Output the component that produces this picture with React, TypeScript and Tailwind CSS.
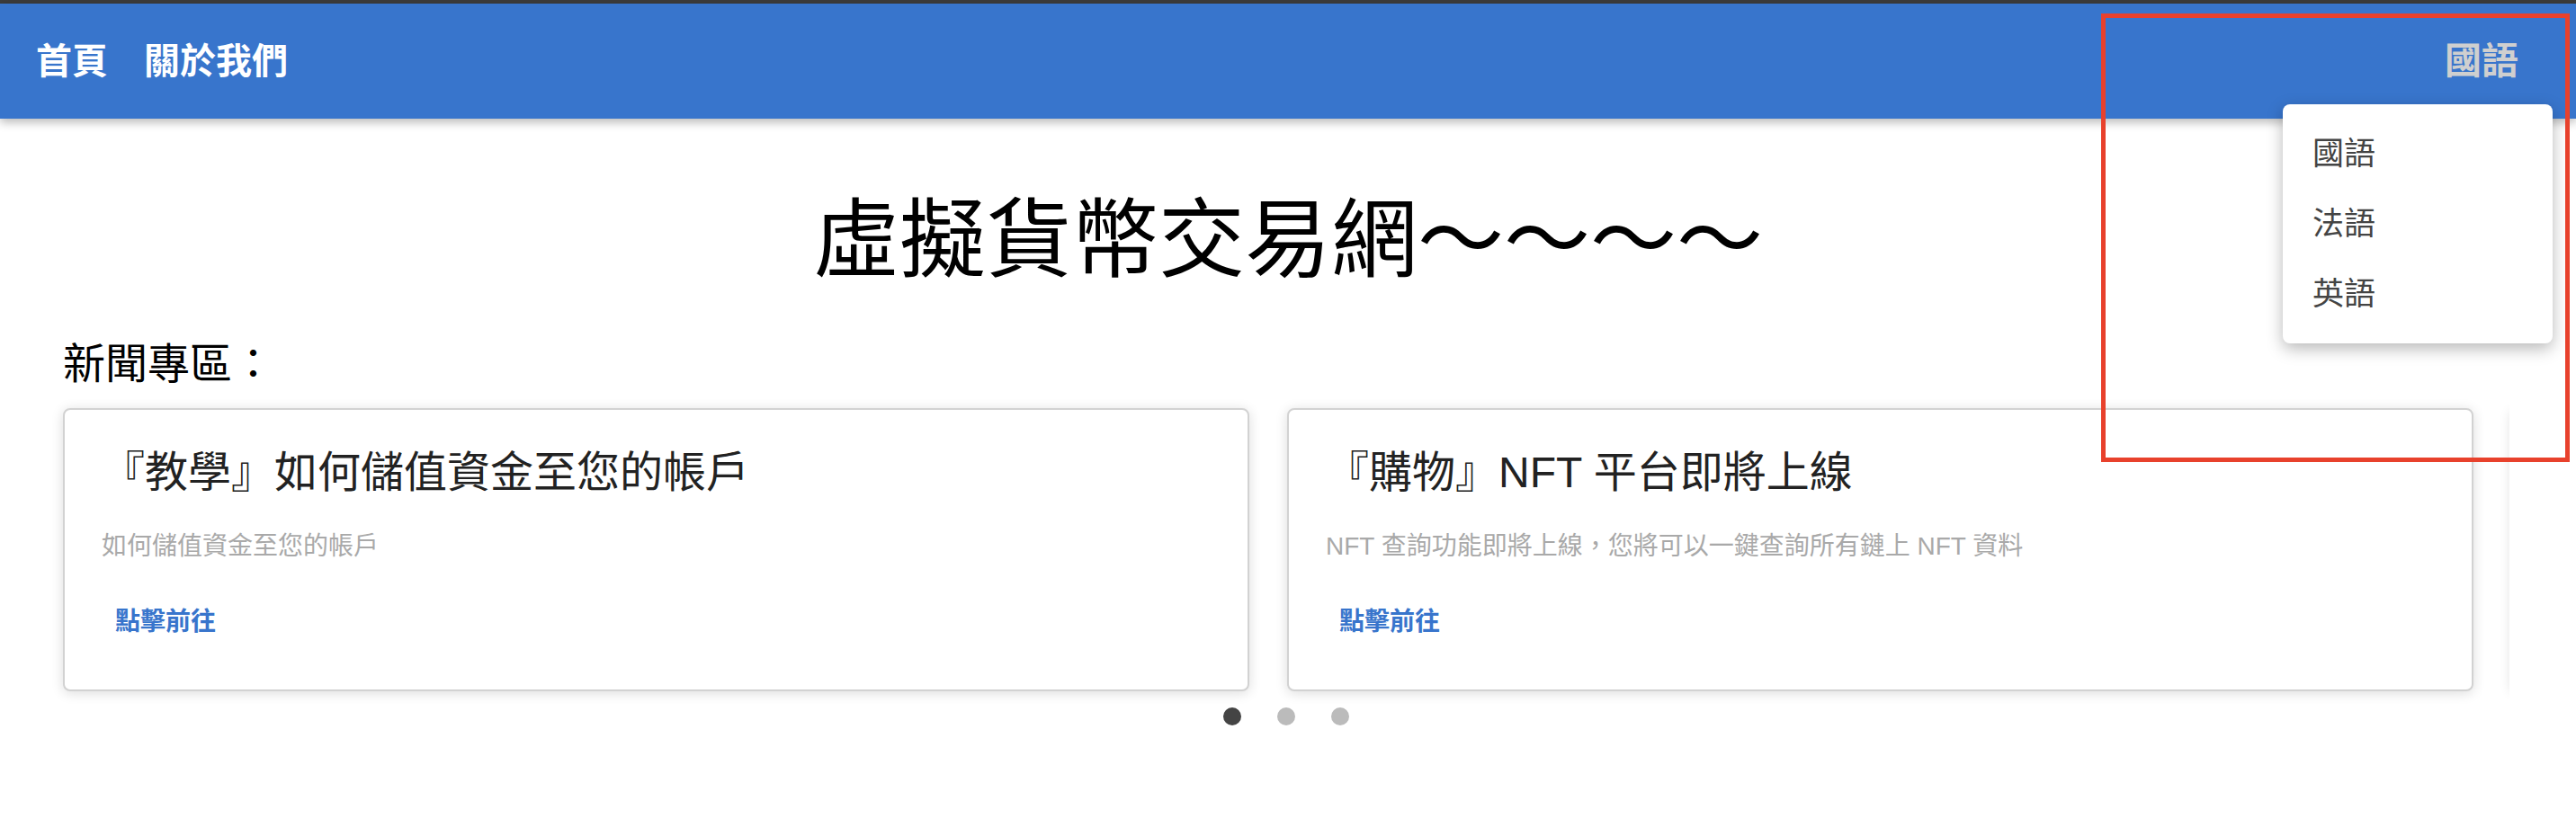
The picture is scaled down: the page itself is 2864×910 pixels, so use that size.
import React from "react";

const FONT = { fontFamily: '"Liberation Sans", "Noto Sans CJK TC", sans-serif' };

const cards = [
  {
    title: "『教學』如何儲值資金至您的帳戶",
    desc: "如何儲值資金至您的帳戶",
  },
  {
    title: "『購物』NFT 平台即將上線",
    desc: "NFT 查詢功能即將上線，您將可以一鍵查詢所有鏈上 NFT 資料",
  },
];

function Card({ title, desc }: { title: string; desc: string }) {
  return (
    <div className="w-[1319px] h-[315px] shrink-0 bg-white border-2 border-[#d2d2d2] rounded-lg shadow-[0_2px_14px_rgba(0,0,0,0.14)] flex flex-col pt-[34px] px-[41px]">
      <div className="text-[48px] leading-[72px] text-[#222]">{title}</div>
      <div className="mt-[25px] text-[28px] leading-[42px] text-[#a9a9a9]">{desc}</div>
      <div className="mt-[42px] pl-[15px] text-[28px] leading-[42px] font-bold text-[#3875cc]">點擊前往</div>
    </div>
  );
}

export default function App() {
  return (
    <div className="relative w-[2864px] h-[910px] bg-white overflow-hidden" style={FONT}>
      <div className="h-[4px] bg-[#3c3c3c]" />
      <header className="relative z-10 h-[128px] bg-[#3875cc] shadow-[0_4px_10px_rgba(0,0,0,0.28)] flex items-center justify-between pl-[40px] pr-[64px]">
        <nav className="flex items-center gap-[40px] text-[40px] font-bold text-white leading-none">
          <span>首頁</span>
          <span>關於我們</span>
        </nav>
        <span className="text-[41px] font-bold text-[#cfcfcf] leading-none">國語</span>
      </header>

      <main>
        <h1 className="mt-[63px] text-center text-[96px] leading-[144px] font-normal text-black">
          虛擬貨幣交易網～～～～
        </h1>
        <h2 className="mt-[31px] ml-[70px] text-[47px] leading-[69px] font-normal text-black">新聞專區：</h2>
        <div className="ml-[48px] w-[2742px] overflow-hidden py-[15px]">
          <div className="flex gap-[42px] pl-[22px]">
            {cards.map((c, i) => (
              <Card key={i} title={c.title} desc={c.desc} />
            ))}
            <div className="w-[1319px] h-[315px] shrink-0 bg-white border-2 border-[#d2d2d2] rounded-lg shadow-[0_2px_14px_rgba(0,0,0,0.14)]" />
          </div>
        </div>
        <div className="mt-[3px] flex justify-center gap-[40px] pr-[4px]">
          <span className="w-[20px] h-[20px] rounded-full bg-[#444]" />
          <span className="w-[20px] h-[20px] rounded-full bg-[#bbb]" />
          <span className="w-[20px] h-[20px] rounded-full bg-[#bbb]" />
        </div>
      </main>

      <div className="absolute left-[2538px] top-[116px] z-20 w-[300px] h-[266px] bg-white rounded-lg shadow-[0_6px_18px_rgba(0,0,0,0.28)] py-[16px]">
        {["國語", "法語", "英語"].map((l) => (
          <div key={l} className="h-[78px] flex items-center pl-[33px] text-[35px] text-[#444]">
            {l}
          </div>
        ))}
      </div>

      <div className="absolute left-[2336px] top-[15px] z-30 w-[521px] h-[499px] border-[5px] border-[#e8412c] pointer-events-none" />
    </div>
  );
}
